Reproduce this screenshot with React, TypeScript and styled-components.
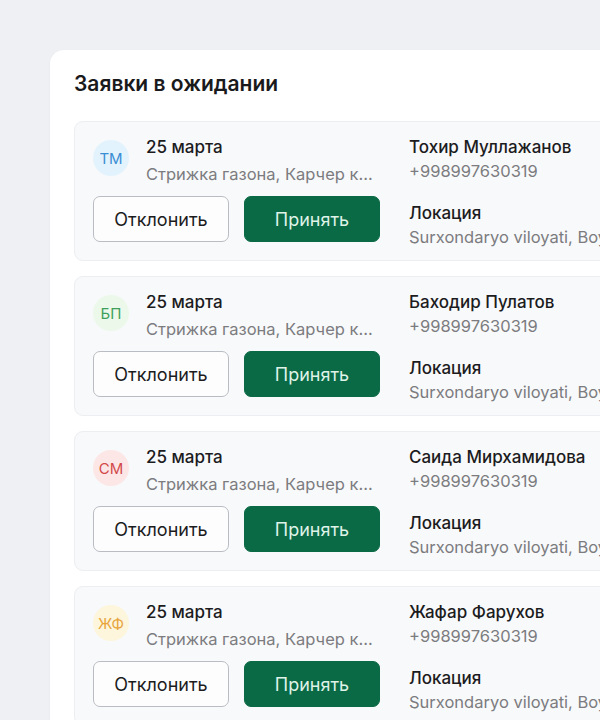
import styled, { createGlobalStyle } from "styled-components";

const GlobalStyle = createGlobalStyle`
  html, body {
    margin: 0;
    padding: 0;
    background: #eef0f3;
    overflow: hidden;
  }
  body {
    font-family: Inter, "Noto Sans", "Liberation Sans", sans-serif;
    -webkit-font-smoothing: antialiased;
  }
`;

type Tone = "blue" | "green" | "red" | "yellow";

const tones: Record<Tone, { bg: string; fg: string }> = {
  blue: { bg: "#e3f3fd", fg: "#3a8ed3" },
  green: { bg: "#ecf8ea", fg: "#3f9f5b" },
  red: { bg: "#fde6e6", fg: "#d24a4a" },
  yellow: { bg: "#fdf5dc", fg: "#e8a53e" },
};

const requests: { initials: string; tone: Tone; name: string }[] = [
  { initials: "ТМ", tone: "blue", name: "Тохир Муллажанов" },
  { initials: "БП", tone: "green", name: "Баходир Пулатов" },
  { initials: "СМ", tone: "red", name: "Саида Мирхамидова" },
  { initials: "ЖФ", tone: "yellow", name: "Жафар Фарухов" },
];

const App = () => {
  return (
    <>
      <GlobalStyle />
      <Page>
        <Panel>
          <Title>Заявки в ожидании</Title>
          <List>
            {requests.map((r) => (
              <Card key={r.initials}>
                <Left>
                  <Head>
                    <Avatar $tone={r.tone}>{r.initials}</Avatar>
                    <Info>
                      <Strong>25 марта</Strong>
                      <Services>Стрижка газона, Карчер квартиры, Мойка окон</Services>
                    </Info>
                  </Head>
                  <Actions>
                    <Button>Отклонить</Button>
                    <Button $primary>Принять</Button>
                  </Actions>
                </Left>
                <Right>
                  <Strong>{r.name}</Strong>
                  <Muted>+998997630319</Muted>
                  <Strong $gap>Локация</Strong>
                  <Muted>Surxondaryo viloyati, Boysun tumani</Muted>
                </Right>
              </Card>
            ))}
          </List>
        </Panel>
      </Page>
    </>
  );
};

export default App;

const Page = styled.div`
  padding: 50px 0 0 50px;
  height: 720px;
  box-sizing: border-box;
`;

const Panel = styled.section`
  width: 640px;
  min-height: 720px;
  background: #ffffff;
  border-radius: 14px;
  padding: 20px 24px;
  box-sizing: border-box;
  box-shadow: 0 1px 3px rgba(20, 30, 50, 0.04);
`;

const Title = styled.h1`
  margin: 0 0 23px;
  font-size: 21px;
  line-height: 28px;
  font-weight: 600;
  color: #1a1a1c;
`;

const List = styled.div`
  display: flex;
  flex-direction: column;
  gap: 15px;
`;

const Card = styled.div`
  display: flex;
  align-items: flex-start;
  gap: 29px;
  padding: 13px 0 18px 18px;
  background: #f8f9fa;
  border: 1px solid #eceef1;
  border-radius: 9px;
`;

const Left = styled.div`
  width: 287px;
  flex-shrink: 0;
  display: flex;
  flex-direction: column;
  gap: 10px;
`;

const Head = styled.div`
  display: flex;
  align-items: flex-start;
  gap: 17px;
`;

const Avatar = styled.div<{ $tone: Tone }>`
  width: 36px;
  height: 36px;
  margin-top: 5px;
  flex-shrink: 0;
  border-radius: 50%;
  display: flex;
  align-items: center;
  justify-content: center;
  font-size: 15px;
  background: ${(p) => tones[p.$tone].bg};
  color: ${(p) => tones[p.$tone].fg};
`;

const Info = styled.div`
  display: flex;
  flex-direction: column;
  gap: 3px;
  min-width: 0;
`;

const Strong = styled.div<{ $gap?: boolean }>`
  font-size: 17px;
  line-height: 24px;
  font-weight: 500;
  color: #1c1c1e;
  white-space: nowrap;
  margin-top: ${(p) => (p.$gap ? "18px" : "0")};
`;

const Services = styled.div`
  font-size: 16.5px;
  line-height: 24px;
  color: #7c7c80;
  white-space: nowrap;
  overflow: hidden;
  text-overflow: ellipsis;
`;

const Muted = styled.div`
  font-size: 16.5px;
  line-height: 24px;
  color: #7c7c80;
  white-space: nowrap;
`;

const Actions = styled.div`
  display: flex;
  gap: 15px;
`;

const Button = styled.button<{ $primary?: boolean }>`
  flex: 1;
  height: 46px;
  border-radius: 7px;
  font-family: inherit;
  font-size: 18px;
  cursor: pointer;
  border: 1px solid ${(p) => (p.$primary ? "#0b6a46" : "#b9bdc3")};
  background: ${(p) => (p.$primary ? "#0b6a46" : "#fdfdfd")};
  color: ${(p) => (p.$primary ? "#dff3e8" : "#1c1c1e")};
`;

const Right = styled.div`
  display: flex;
  flex-direction: column;
  margin-bottom: -7px;
`;
